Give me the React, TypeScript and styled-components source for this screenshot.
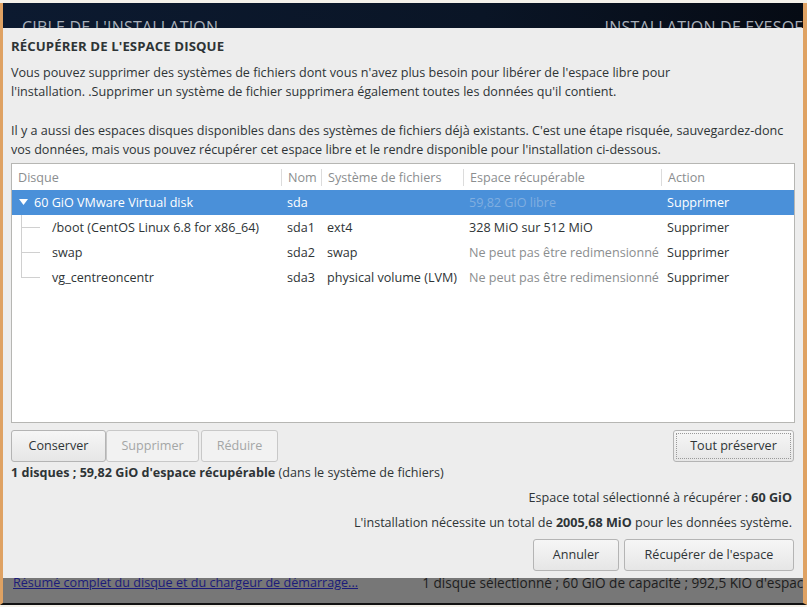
import React from 'react';
import styled, { createGlobalStyle } from 'styled-components';

const GlobalStyle = createGlobalStyle`
  html, body {
    margin: 0;
    padding: 0;
    background: #f4f1ea;
  }
  body {
    font-family: 'Open Sans', 'DejaVu Sans', sans-serif;
    color: #2e3436;
  }
`;

const Screen = styled.div`
  position: relative;
  width: 800px;
  height: 600px;
  margin-top: 3px;
  border-left: 3px solid #dfa263;
  border-right: 4px solid #dfa263;
  border-bottom: 2px solid #111;
  display: flex;
  flex-direction: column;
  overflow: hidden;
`;

const Header = styled.div`
  height: 80px;
  background: linear-gradient(90deg, #0c1a30 0%, #0a1526 60%, #060b14 100%);
  display: flex;
  justify-content: space-between;
  align-items: flex-start;
  padding: 13px 0 0 19px;
  color: #a9b0ba;
  font-size: 16px;
  letter-spacing: 0.2px;
  white-space: nowrap;
`;

const HeaderRight = styled.span`
  margin-right: -12px;
`;

const Middle = styled.div`
  flex: 1;
  background: #3c3c3c;
`;

const Footer = styled.div`
  height: 25px;
  background: #777777;
  display: flex;
  justify-content: space-between;
  align-items: flex-start;
  padding: 0 0 0 10px;
  font-size: 12.6px;
  line-height: 15px;
  white-space: nowrap;
  overflow: hidden;
`;

const FooterLink = styled.a`
  color: #1b1b7a;
  text-decoration: underline;
  margin-top: -3px;
  flex-shrink: 0;
`;

const FooterInfo = styled.span`
  color: #1d1d1d;
  font-size: 13.6px;
  margin-top: -3px;
  margin-right: -8px;
  flex-shrink: 0;
`;

const Dialog = styled.div`
  position: absolute;
  left: 0;
  right: 0;
  top: 25px;
  height: 550px;
  background: #ededed;
  padding: 0 9px 0 8px;
  box-sizing: border-box;
  display: flex;
  flex-direction: column;
  font-size: 12.6px;
`;

const Title = styled.h1`
  margin: 9px 0 0 0;
  font-size: 13.2px;
  font-weight: 700;
  line-height: 19px;
  letter-spacing: 0.1px;
  color: #2e3436;
`;

const Para = styled.p<{ $top: number }>`
  margin: ${(p) => p.$top}px 0 0 0;
  line-height: 19px;
  color: #2e3436;
`;

const TableBox = styled.div`
  margin-top: 4px;
  height: 260px;
  box-sizing: border-box;
  border: 1px solid #b6b6b3;
  background: #fff;
  width: 784px;
`;

const cols = '269px 40px 142px 198px 1fr';

const HeadRow = styled.div`
  display: grid;
  grid-template-columns: ${cols};
  height: 26px;
  align-items: center;
  color: #8b8e8f;
`;

const HeadCell = styled.div<{ $sep?: boolean }>`
  height: 17px;
  line-height: 17px;
  padding-left: 6px;
  border-left: ${(p) => (p.$sep ? '1px solid #dcdcdc' : 'none')};
  white-space: nowrap;
`;

const Row = styled.div<{ $selected?: boolean }>`
  display: grid;
  grid-template-columns: ${cols};
  height: 25px;
  align-items: center;
  background: ${(p) => (p.$selected ? '#4a90d9' : 'transparent')};
  color: ${(p) => (p.$selected ? '#ffffff' : '#2e3436')};
`;

const Cell = styled.div<{ $muted?: boolean; $faded?: boolean }>`
  padding-left: 6px;
  white-space: nowrap;
  overflow: hidden;
  color: ${(p) => (p.$faded ? '#80aee0' : p.$muted ? '#8b8e8f' : 'inherit')};
`;

const DiskCell = styled.div<{ $child?: boolean; $last?: boolean }>`
  position: relative;
  height: 25px;
  line-height: 25px;
  padding-left: ${(p) => (p.$child ? 40 : 22)}px;
  white-space: nowrap;
  &::before {
    content: '';
    display: ${(p) => (p.$child ? 'block' : 'none')};
    position: absolute;
    left: 9px;
    top: 0;
    height: ${(p) => (p.$last ? '13px' : '25px')};
    border-left: 1px solid #d0d0d0;
  }
  &::after {
    content: '';
    display: ${(p) => (p.$child ? 'block' : 'none')};
    position: absolute;
    left: 9px;
    top: 12px;
    width: 19px;
    border-top: 1px solid #d0d0d0;
  }
`;

const Expander = styled.svg`
  position: absolute;
  left: 7px;
  top: 9px;
`;

const ButtonBar = styled.div`
  margin-top: 7px;
  display: flex;
  align-items: center;
  justify-content: space-between;
  width: 783px;
`;

const Group = styled.div`
  display: flex;
`;

const Button = styled.button<{ $w: number; $gap?: number; $focus?: boolean }>`
  width: ${(p) => p.$w}px;
  height: 32px;
  margin-left: ${(p) => p.$gap ?? 0}px;
  border: 1px solid #b4b4b4;
  border-radius: 3px;
  background: linear-gradient(#f6f6f6, #e6e6e6);
  font-family: 'Open Sans', 'DejaVu Sans', sans-serif;
  font-size: 12.6px;
  color: #2e3436;
  padding: 0 0 2px 0;
  outline: ${(p) => (p.$focus ? '1px dotted #999' : 'none')};
  outline-offset: -4px;
  &:disabled {
    color: #a4a6a6;
    background: #f2f2f2;
    border-color: #c8c8c8;
  }
`;

const Summary = styled.div`
  margin-top: 2px;
  line-height: 18px;
`;

const RightLine = styled.div<{ $top: number }>`
  margin-top: ${(p) => p.$top}px;
  text-align: right;
  padding-right: 2px;
  line-height: 18px;
`;

const ActionRow = styled.div`
  margin-top: 7px;
  display: flex;
  justify-content: flex-end;
  gap: 5px;
`;

type Part = {
  disk: string;
  name: string;
  fs: string;
  space: string;
  muted?: boolean;
};

const parts: Part[] = [
  { disk: '/boot (CentOS Linux 6.8 for x86_64)', name: 'sda1', fs: 'ext4', space: '328 MiO sur 512 MiO' },
  { disk: 'swap', name: 'sda2', fs: 'swap', space: 'Ne peut pas être redimensionné', muted: true },
  { disk: 'vg_centreoncentr', name: 'sda3', fs: 'physical volume (LVM)', space: 'Ne peut pas être redimensionné', muted: true },
];

export default function App() {
  return (
    <>
      <GlobalStyle />
      <Screen>
        <Header>
          <span>CIBLE DE L'INSTALLATION</span>
          <HeaderRight>INSTALLATION DE EYESOFN</HeaderRight>
        </Header>
        <Middle />
        <Footer>
          <FooterLink>Résumé complet du disque et du chargeur de démarrage...</FooterLink>
          <FooterInfo>1 disque sélectionné ; 60 GiO de capacité ; 992,5 KiO d'espace</FooterInfo>
        </Footer>

        <Dialog>
          <Title>RÉCUPÉRER DE L'ESPACE DISQUE</Title>
          <Para $top={7}>
            Vous pouvez supprimer des systèmes de fichiers dont vous n'avez plus besoin pour libérer de l'espace libre pour
            <br />
            l'installation. .Supprimer un système de fichier supprimera également toutes les données qu'il contient.
          </Para>
          <Para $top={20}>
            Il y a aussi des espaces disques disponibles dans des systèmes de fichiers déjà existants. C'est une étape risquée, sauvegardez-donc
            <br />
            vos données, mais vous pouvez récupérer cet espace libre et le rendre disponible pour l'installation ci-dessous.
          </Para>

          <TableBox>
            <HeadRow>
              <HeadCell>Disque</HeadCell>
              <HeadCell $sep>Nom</HeadCell>
              <HeadCell $sep>Système de fichiers</HeadCell>
              <HeadCell $sep>Espace récupérable</HeadCell>
              <HeadCell $sep>Action</HeadCell>
            </HeadRow>
            <Row $selected>
              <DiskCell>
                <Expander width="9" height="7" viewBox="0 0 9 7">
                  <path d="M0 0 L9 0 L4.5 6 Z" fill="#ffffff" />
                </Expander>
                60 GiO VMware Virtual disk
              </DiskCell>
              <Cell>sda</Cell>
              <Cell></Cell>
              <Cell $faded>59,82 GiO libre</Cell>
              <Cell>Supprimer</Cell>
            </Row>
            {parts.map((p, i) => (
              <Row key={p.name}>
                <DiskCell $child $last={i === parts.length - 1}>
                  {p.disk}
                </DiskCell>
                <Cell>{p.name}</Cell>
                <Cell>{p.fs}</Cell>
                <Cell $muted={p.muted}>{p.space}</Cell>
                <Cell>Supprimer</Cell>
              </Row>
            ))}
          </TableBox>

          <ButtonBar>
            <Group>
              <Button $w={95}>Conserver</Button>
              <Button $w={93} disabled>
                Supprimer
              </Button>
              <Button $w={77} $gap={2} disabled>
                Réduire
              </Button>
            </Group>
            <Button $w={121} $focus>
              Tout préserver
            </Button>
          </ButtonBar>

          <Summary>
            <b>1 disques ; 59,82 GiO d'espace récupérable</b> (dans le système de fichiers)
          </Summary>

          <RightLine $top={7}>
            Espace total sélectionné à récupérer : <b>60 GiO</b>
          </RightLine>
          <RightLine $top={7}>
            L'installation nécessite un total de <b>2005,68 MiO</b> pour les données système.
          </RightLine>

          <ActionRow>
            <Button $w={86}>Annuler</Button>
            <Button $w={170}>Récupérer de l'espace</Button>
          </ActionRow>
        </Dialog>
      </Screen>
    </>
  );
}
